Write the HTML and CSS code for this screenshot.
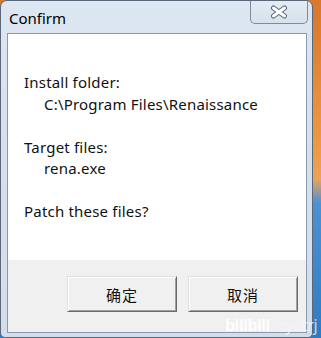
FILE: index.html
```html
<!DOCTYPE html>
<html lang="en">
<head>
    <meta charset="UTF-8">
    <meta name="viewport" content="width=device-width, initial-scale=1.0">
    <title>Confirm</title>
    <link rel="stylesheet" href="styles.css">
</head>
<body>
    <div class="desktop">
        <div class="window">
            <div class="titlebar">
                <span class="title">Confirm</span>
                <button class="close-btn" type="button" aria-label="Close">
                    <svg width="18" height="14" viewBox="0 0 18 14">
                        <path d="M3.5 3 L14.5 11 M14.5 3 L3.5 11" stroke="#5f6b7a" stroke-width="5" stroke-linecap="round"/>
                        <path d="M3.5 3 L14.5 11 M14.5 3 L3.5 11" stroke="#ffffff" stroke-width="3" stroke-linecap="round"/>
                    </svg>
                </button>
            </div>
            <div class="client">
                <div class="message">
                    <div class="group">
                        <p>Install folder:</p>
                        <p class="indent">C:\Program Files\Renaissance</p>
                    </div>
                    <div class="group">
                        <p>Target files:</p>
                        <p class="indent">rena.exe</p>
                    </div>
                    <div class="group">
                        <p>Patch these files?</p>
                    </div>
                </div>
                <div class="actions">
                    <button class="btn" type="button">确定</button>
                    <button class="btn" type="button">取消</button>
                </div>
            </div>
        </div>
        <div class="watermark"><span class="wm-logo">bilibili</span><span class="wm-user">cydtrj</span></div>
    </div>
</body>
</html>
```

FILE: styles.css
```css
html, body {
    margin: 0;
    padding: 0;
}

body {
    width: 321px;
    height: 338px;
    overflow: hidden;
    font-family: "Noto Sans", "Noto Sans CJK SC", sans-serif;
}

/* desktop behind the dialog */
.desktop {
    position: relative;
    display: flex;
    width: 321px;
    height: 338px;
    background: linear-gradient(to bottom, #d9772a 0, #ef9a45 45%, #e9a35a 53%, #4d92d2 60%, #2d7bc3 100%);
}

.window {
    display: flex;
    flex-direction: column;
    box-sizing: border-box;
    width: 313px;
    height: 338px;
    padding: 0 5px 4px 6px;
    border: 1px solid #5b6879;
    border-radius: 7px 7px 5px 5px;
    background: linear-gradient(to bottom, #dde7f2, #d6e1ed 40%, #d3deea);
}

.titlebar {
    display: flex;
    align-items: flex-start;
    height: 32px;
    padding-left: 2px;
}

.title {
    margin-top: 7px;
    font-size: 15px;
    line-height: 20px;
    color: #000;
}

.close-btn {
    display: flex;
    align-items: center;
    justify-content: center;
    width: 58px;
    height: 23px;
    margin-left: auto;
    margin-right: -1px;
    padding: 0;
    border: 1px solid #7f8b9a;
    border-top: none;
    border-radius: 0 0 5px 5px;
    background: linear-gradient(to bottom, #e4ebf3, #d7e1ec);
}

.client {
    display: flex;
    flex-direction: column;
    flex: 1;
    border: 1px solid #8a9aad;
    background-color: #f0f0f0;
}

.message {
    box-sizing: border-box;
    height: 226px;
    padding: 38px 16px 0;
    background-color: #fff;
    font-size: 15px;
    line-height: 21.5px;
    letter-spacing: 0.2px;
    color: #111;
}

.message p {
    margin: 0;
}

.group {
    margin-bottom: 21.5px;
}

.indent {
    padding-left: 20px;
}

.actions {
    display: flex;
    justify-content: flex-end;
    gap: 11px;
    padding: 16px 8px 0 0;
}

.btn {
    box-sizing: border-box;
    width: 110px;
    height: 36px;
    padding: 0;
    border: 1px solid;
    border-color: #e0e0e0 #6a6a6a #6a6a6a #e0e0e0;
    box-shadow: inset 1px 1px #fff, inset -1px -1px #a0a0a0;
    background-color: #f0f0f0;
    font-family: "Noto Sans CJK SC", sans-serif;
    font-size: 15px;
    letter-spacing: 1px;
    color: #111;
}

/* video watermark over the corner */
.watermark {
    position: absolute;
    left: 225px;
    top: 315px;
    white-space: nowrap;
    font-size: 16px;
    line-height: 20px;
    color: rgba(255, 255, 255, 0.9);
}

.wm-logo {
    font-weight: bold;
    letter-spacing: -0.5px;
}

.wm-user {
    margin-left: 8px;
    letter-spacing: -0.5px;
    color: rgba(240, 246, 252, 0.8);
}
```
